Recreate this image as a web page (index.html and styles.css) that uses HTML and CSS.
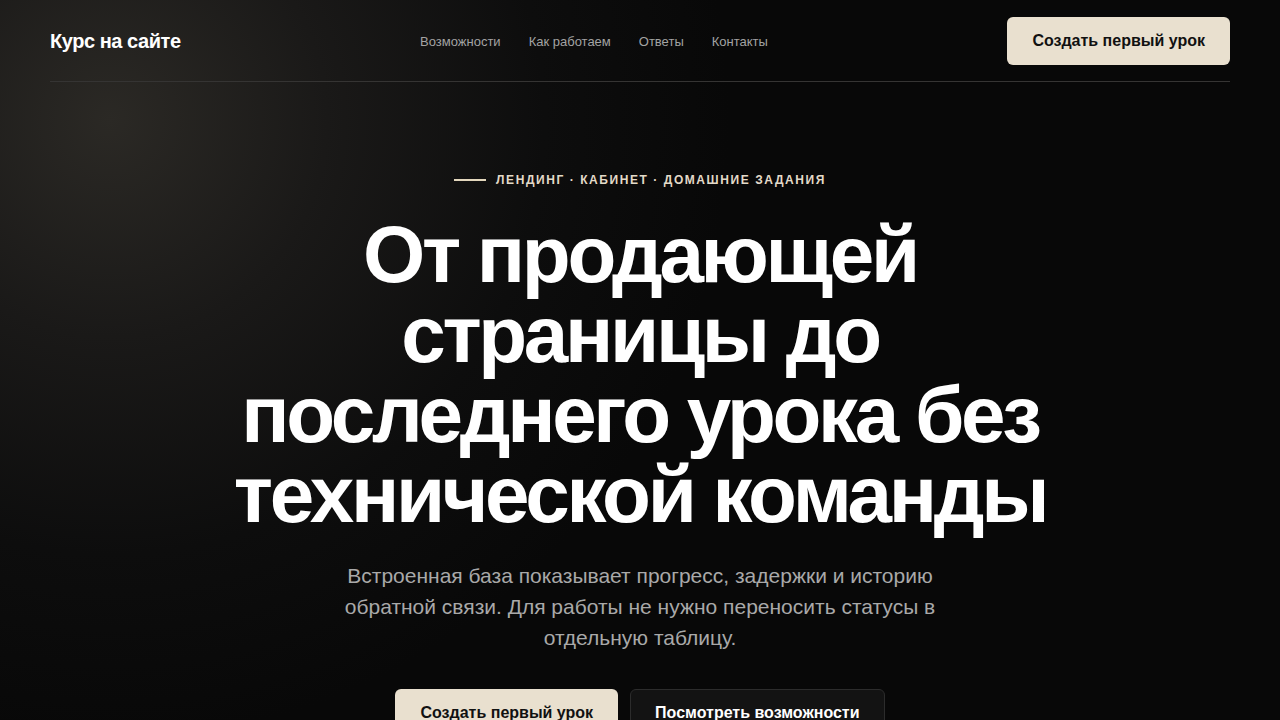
FILE: index.html
```html
<!DOCTYPE html>
<html lang="ru">
<head>
<meta charset="utf-8">
<title>Курс на сайте</title>
<link rel="stylesheet" href="styles.css">
</head>
<body>
<div class="page">
  <header class="header">
    <a class="logo" href="#">Курс на сайте</a>
    <nav class="nav">
      <a href="#">Возможности</a>
      <a href="#">Как работаем</a>
      <a href="#">Ответы</a>
      <a href="#">Контакты</a>
    </nav>
    <a class="btn btn-primary" href="#">Создать первый урок</a>
  </header>
  <main class="hero">
    <div class="eyebrow"><span class="eyebrow-line"></span>Лендинг · кабинет · домашние задания</div>
    <h1 class="title">От продающей страницы до последнего урока без технической команды</h1>
    <p class="lead">Встроенная база показывает прогресс, задержки и историю обратной связи. Для работы не нужно переносить статусы в отдельную таблицу.</p>
    <div class="actions">
      <a class="btn btn-primary" href="#">Создать первый урок</a>
      <a class="btn btn-secondary" href="#">Посмотреть возможности</a>
    </div>
  </main>
</div>
</body>
</html>
```

FILE: styles.css
```css
* { box-sizing: border-box; }
html, body { margin: 0; padding: 0; }
body {
  min-height: 720px;
  font-family: "Liberation Sans", Arial, sans-serif;
  color: #fff;
  background-color: #080808;
  background-image: radial-gradient(circle 620px at 110px 120px, #2b2925 0%, #1a1918 35%, #0d0d0d 70%, #080808 100%);
  overflow: hidden;
}
a { text-decoration: none; color: inherit; }
.page { padding: 0 50px; }
.header {
  display: flex;
  align-items: center;
  justify-content: space-between;
  padding: 17px 0 16px;
  border-bottom: 1px solid #353433;
}
.logo { font-size: 20px; font-weight: 700; letter-spacing: -0.45px; color: #fff; }
.nav { display: flex; gap: 28px; font-size: 13px; color: #a3a3a3; }
.btn {
  display: inline-flex;
  align-items: center;
  justify-content: center;
  height: 48px;
  padding: 0 25px;
  border-radius: 6px;
  font-size: 16px;
  font-weight: 700;
}
.btn-primary { background: #e9e0cf; color: #111; }
.btn-secondary { background: #131313; color: #fff; border: 1px solid #2c2c2c; padding: 0 24px; }
.hero {
  display: flex;
  flex-direction: column;
  align-items: center;
  text-align: center;
  padding-top: 91px;
}
.eyebrow {
  display: flex;
  align-items: center;
  gap: 10px;
  font-size: 12px;
  font-weight: 700;
  letter-spacing: 1.57px;
  text-transform: uppercase;
  color: #e3dac8;
  line-height: 14px;
}
.eyebrow-line { width: 32px; height: 2px; background: #e3d7bd; }
.title {
  margin: 28px 0 0;
  max-width: 840px;
  font-size: 80px;
  line-height: 80px;
  font-weight: 700;
  letter-spacing: -3.3px;
  color: #fff;
}
.lead {
  margin: 25px 0 0;
  max-width: 610px;
  font-size: 21px;
  line-height: 31px;
  color: #a9a9a9;
}
.actions { display: flex; gap: 12px; margin-top: 36px; }
```
